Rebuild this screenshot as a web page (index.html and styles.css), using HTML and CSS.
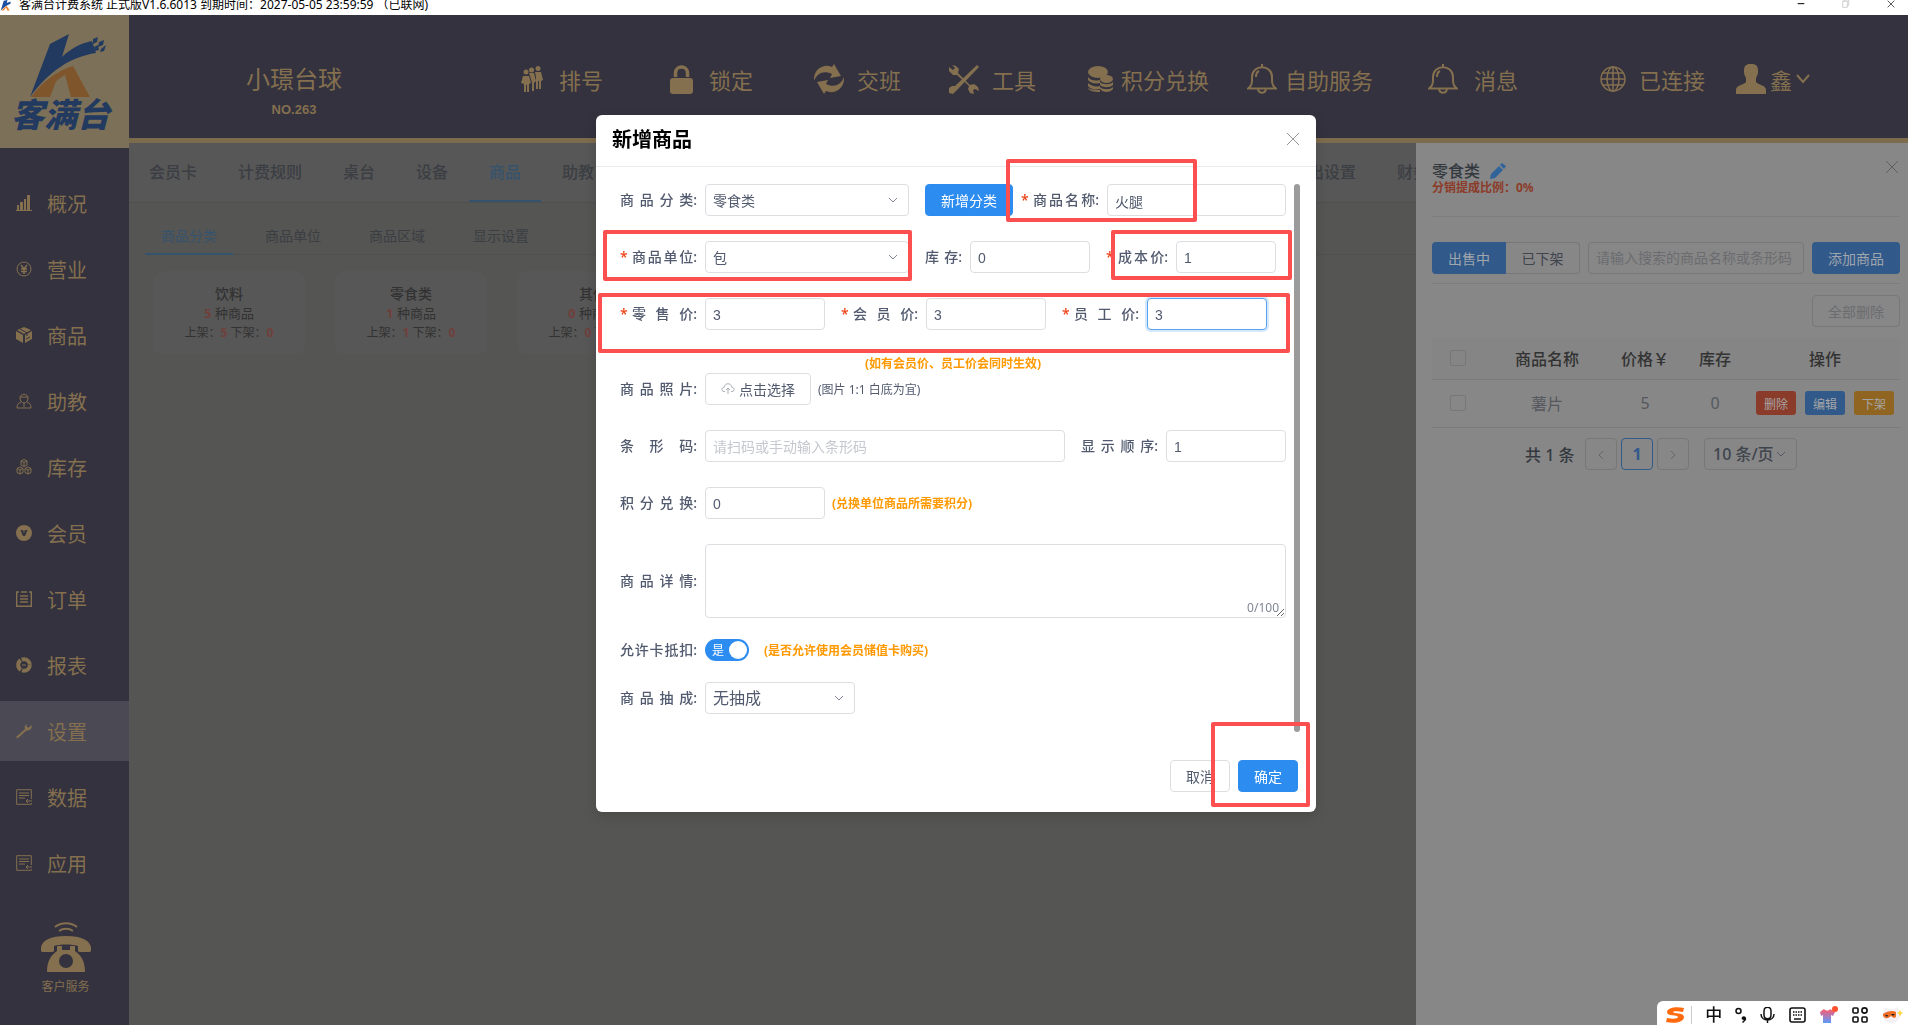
FILE: index.html
```
<!DOCTYPE html>
<html lang="zh-CN">

<head>
  <meta charset="utf-8">
  <title>客满台计费系统</title>
  <link rel="stylesheet" href="styles.css">
</head>

<body>
  <div class="titlebar">
    <svg class="titlebar-logo" viewBox="0 0 16 16"><path d="M5 1l5-1-1 4 5-2v3C9 7 5 10 1 14z" fill="#1c4fa0"/><path d="M2 14c3-3 5-5 7-6l4 6h-3L8 10l-3 4z" fill="#f08020"/></svg>
    <span class="titlebar-text">客满台计费系统 正式版V1.6.6013 到期时间：2027-05-05 23:59:59 （已联网)</span>
    <div class="window-buttons">
      <svg viewBox="0 0 12 12"><path d="M1 5.500h10" stroke="#000" stroke-width="1.500"/></svg>
      <svg viewBox="0 0 12 12"><path d="M1 2h7v9H1zM3 2V0h7v8H8" fill="none" stroke="#bbb"/></svg>
      <svg viewBox="0 0 12 12"><path d="M1 1l10 10M11 1L1 11" stroke="#000"/></svg>
    </div>
  </div>

  <div class="app">
    <aside class="sidebar">
      <div class="logo">
        <svg class="logo-mark" viewBox="0 0 80 66">
          <path d="M21 11L40 1 33 24C41 16 52 10 63 8l4 12C42 24 21 37 1 64z" fill="#233a60"/>
          <path d="M2 64C14 48 28 38 44 33l17 31H42L36 42c-6 3-9 6-10 9l-5 13z" fill="#7f562c"/>
          <path d="M64 6l5-2-1 5-4 2zM70 9l5-2-1 5-5 2zM65 14l4-2 1 5-4 1zM72 16l5-4-2 6-4 1z" fill="#233a60"/>
        </svg>
        <span class="logo-text">客满台</span>
      </div>
      <nav class="menu">
        <a class="menu-item" href="#"><svg viewBox="0 0 16 16"><path d="M0 15h16v1H0zM1 10h2v5H1zM4 7h3v8H4zM8 4h2v11H8zM11 0h3v15h-3z"/></svg>概况</a>
        <a class="menu-item" href="#"><svg class="line" viewBox="0 0 16 16"><circle cx="8" cy="8" r="7"/><path d="M5 4l3 4 3-4M8 8v5M5 8h6M5 10.500h6" stroke-width="1.600"/></svg>营业</a>
        <a class="menu-item" href="#"><svg viewBox="0 0 16 16"><path d="M8 0l7 3-7 4-7-4zM0 4l7 4v8l-7-4zM16 4v8l-7 4V8z"/><path d="M4 2l7 4v3M10 12l4-2" fill="none" stroke="#33323e"/></svg>商品</a>
        <a class="menu-item" href="#"><svg class="line" viewBox="0 0 16 16"><path d="M4 5c0-5 8-5 8 0 0 3-2 5-4 5S4 8 4 5zM4 4h8M5 9c-3 1-4 3-4 6h14c0-3-1-5-4-6M8 10v4"/></svg>助教</a>
        <a class="menu-item" href="#"><svg class="line" viewBox="0 0 16 16"><path d="M8 0.500l3 1.500v4L8 7.500 5 6V2zM5 2l3 1.500L11 2M8 3.500v4M4 8l3 1.500v4L4 15l-3-1.500v-4zM1 9.500L4 11l3-1.500M4 11v4M12 8l3 1.500v4L12 15l-3-1.500v-4zM9 9.500l3 1.500 3-1.500M12 11v4"/></svg>库存</a>
        <a class="menu-item" href="#"><svg viewBox="0 0 16 16"><circle cx="8" cy="8" r="8"/><path d="M4.500 5H7l1 3 1-3h2.500L9 11H7z" fill="#33323e"/></svg>会员</a>
        <a class="menu-item" href="#"><svg class="line" viewBox="0 0 16 16"><path d="M3 1H.700v14.300h14.600V1H13M5 1h6M4 5h8M4 8h8M4 11h8" stroke-width="1.400"/></svg>订单</a>
        <a class="menu-item" href="#"><svg class="line" viewBox="0 0 16 16"><circle cx="8" cy="8" r="5.800" stroke-width="4" stroke-dasharray="11 1.150"/><path d="M6 8h4"/></svg>报表</a>
        <a class="menu-item active" href="#"><svg viewBox="0 0 16 16"><path d="M0 14L9 6c-1-2 0-4 2-5l-.500 3L13 4.500 15.500 2c1 3-1 6-5 5.500L1.500 15.500z"/></svg>设置</a>
        <a class="menu-item" href="#"><svg class="line" viewBox="0 0 16 16"><path d="M15.300 10V.700H.700v14.600h14.600V14M3 4h10M3 6.500h10M3 9h6M16 12h-6M12 10l-2 2 2 2"/></svg>数据</a>
        <a class="menu-item" href="#"><svg class="line" viewBox="0 0 16 16"><path d="M15.300 10V.700H.700v14.600h14.600V14M3 4h10M3 6.500h10M3 9h6M16 12h-6M12 10l-2 2 2 2"/></svg>应用</a>
      </nav>
      <a class="service" href="#">
        <svg viewBox="0 0 50 50">
          <path d="M14 5c6-5 16-5 22 0M18 9c4-3 10-3 14 0" fill="none" stroke="#846f4f" stroke-width="2"/>
          <path d="M0 25c2-7 9-11 25-11s23 4 25 11v3c0 2-1 2-2 2H39c-2 0-2-1-2-2v-4c-6-2-18-2-24 0v4c0 1 0 2-2 2H2c-1 0-2 0-2-2zM16 24h5v4h8v-4h5v5c7 5 10 11 10 21H6c0-10 3-16 10-21z"/>
          <circle cx="25" cy="39" r="7" fill="#33323e"/>
        </svg>
        客户服务
      </a>
    </aside>

    <main class="main">
      <header class="header">
        <div class="shop">
          <span class="shop-name">小璟台球</span>
          <span class="shop-no">NO.263</span>
        </div>
        <nav class="header-nav">
          <a href="#"><svg width="22" height="26" viewBox="0 0 22 26"><circle cx="5" cy="6" r="2.500"/><circle cx="10.500" cy="4" r="2.500"/><circle cx="17" cy="2.500" r="2.500"/><path d="M2 10h6l2 7-2 1v8H6v-7H5v7H3v-8l-3-1zM8 7h5l2 8-2 2v8h-2v-8L9 10zM14 6h6l2 8-2 1v8h-2v-8h-1v8h-2V11z"/></svg>排号</a>
          <a href="#"><svg width="23" height="29" viewBox="0 0 23 29"><path d="M5.500 12V8c0-8 12-8 12 0v4" fill="none" stroke="#846f4f" stroke-width="3.500"/><rect y="13" width="23" height="16" rx="3"/></svg>锁定</a>
          <a class="close-gap" href="#"><svg width="30" height="30" viewBox="0 0 30 30"><path d="M0 17C-1 6 9-1 18 3l2-3 7 12-11 2 2-4C10 6 3 9 0 17zM30 13c1 11-9 18-18 14l-2 3L3 18l11-2-2 4c8 4 15 1 18-7z"/></svg>交班</a>
          <a class="close-gap" href="#"><svg width="30" height="30" viewBox="0 0 30 30"><path d="M28 1l2 2L8 26l-4 4-4-1v-5l3-2h3z"/><path d="M3 1l4 1 3 3-1 4 12 12 4-1 4 3 1 4-4-2-2 1 1 4-4-1-2-4 1-3L8 11l-4 0-4-4 0-4 4 3 2-2z"/></svg>工具</a>
          <a class="tight-gap" href="#"><svg width="25" height="26" viewBox="0 0 25 26"><ellipse cx="10" cy="6" rx="10" ry="6"/><path d="M0 11c3 4 8 4 12 3v3c-5 1-10 0-12-3zM0 17c3 3 8 4 12 3v3c-5 1-10 0-12-3zM0 22c3 2 8 2 12 2v2C6 26 1 25 0 22z"/><ellipse cx="18.500" cy="13" rx="6.500" ry="4"/><path d="M12 16c3 3 10 3 13 0v3c-3 3-10 3-13 0zM12 21c3 3 10 3 13 0v2c-3 4-10 4-13 0z"/></svg>积分兑换</a>
          <a class="tight-gap" href="#"><svg class="line" width="30" height="30" viewBox="0 0 30 30"><path d="M15 0v3M1 24.500h28c-3-2-4-4-4-8V13c0-13-20-13-20 0v3.500c0 4-1 6-4 8zM11 25c1 5 7 5 8 0M9 13c0-4 1-5 3-6" stroke-width="2"/></svg>自助服务</a>
          <a href="#"><svg class="line" width="30" height="30" viewBox="0 0 30 30"><path d="M15 0v3M1 24.500h28c-3-2-4-4-4-8V13c0-13-20-13-20 0v3.500c0 4-1 6-4 8zM11 25c1 5 7 5 8 0M9 13c0-4 1-5 3-6" stroke-width="2"/></svg>消息</a>
          <a class="close-gap" href="#"><svg class="line" width="26" height="26" viewBox="0 0 26 26"><g stroke-width="1.500"><circle cx="13" cy="13" r="12"/><ellipse cx="13" cy="13" rx="6" ry="12"/><path d="M13 1v24M1 13h24M3 7h20M3 19h20" /></g></svg>已连接</a>
          <a class="user" href="#"><svg width="30" height="30" viewBox="0 0 30 30"><path d="M9 2c3-3 9-3 12 0 2 4 1 9-1 12v4c2 3 10 3 10 8v4H0v-4c0-5 8-5 10-8v-4C8 11 7 6 9 2z"/></svg>鑫<svg class="line" width="14" height="10" viewBox="0 0 14 10"><path d="M1 1l6 7 6-7" stroke-width="2"/></svg></a>
        </nav>
      </header>

      <nav class="tabs">
        <a href="#">会员卡</a>
        <a href="#">计费规则</a>
        <a href="#">桌台</a>
        <a href="#">设备</a>
        <a class="active" href="#">商品</a>
        <a href="#">助教</a>
        <a class="tab-far" href="#">支出设置</a>
        <a href="#">财务</a>
      </nav>

      <section class="content">
        <nav class="subtabs">
          <a class="active" href="#">商品分类</a>
          <a href="#">商品单位</a>
          <a href="#">商品区域</a>
          <a href="#">显示设置</a>
        </nav>
        <div class="cards">
          <div class="card">
            <h3>饮料</h3>
            <p class="count"><b>5</b> 种商品</p>
            <p>上架：<b>5</b> 下架：<b>0</b></p>
          </div>
          <div class="card">
            <h3>零食类</h3>
            <p class="count"><b>1</b> 种商品</p>
            <p>上架：<b>1</b> 下架：<b>0</b></p>
          </div>
          <div class="card">
            <h3>其他</h3>
            <p class="count"><b>0</b> 种商品</p>
            <p>上架：<b>0</b> 下架：<b>0</b></p>
          </div>
        </div>
      </section>
    </main>
  </div>

  <aside class="drawer">
    <div class="drawer-head">
      <div>
        <h2>零食类 <svg width="16" height="16" viewBox="0 0 16 16"><path d="M0 16l1-5 8-8 4 4-8 8zM10 2l2-2 4 3-2 3z" fill="#31639b"/></svg></h2>
        <p class="rate">分销提成比例：0%</p>
      </div>
      <button class="icon-btn" type="button" aria-label="关闭"><svg width="12" height="12" viewBox="0 0 12 12"><path d="M0 0l12 12M12 0L0 12" stroke="#606060"/></svg></button>
    </div>
    <div class="drawer-tools">
      <div class="switch-group">
        <button class="on" type="button">出售中</button>
        <button type="button">已下架</button>
      </div>
      <input class="search" type="text" placeholder="请输入搜索的商品名称或条形码" aria-label="搜索商品">
      <button class="add-btn" type="button">添加商品</button>
    </div>
    <div class="drawer-batch">
      <button class="delete-all" type="button" disabled>全部删除</button>
    </div>
    <table class="goods">
      <colgroup>
        <col class="col-check">
        <col class="col-name">
        <col class="col-num">
        <col class="col-num">
        <col class="col-ops">
      </colgroup>
      <thead>
        <tr>
          <th><input type="checkbox" aria-label="全选"></th>
          <th>商品名称</th>
          <th>价格￥</th>
          <th>库存</th>
          <th>操作</th>
        </tr>
      </thead>
      <tbody>
        <tr>
          <td><input type="checkbox" aria-label="选择薯片"></td>
          <td>薯片</td>
          <td>5</td>
          <td>0</td>
          <td>
            <div class="ops">
              <button class="red" type="button">删除</button>
              <button class="blue" type="button">编辑</button>
              <button class="orange" type="button">下架</button>
            </div>
          </td>
        </tr>
      </tbody>
    </table>
    <div class="pager">
      <span class="total">共 1 条</span>
      <button type="button" aria-label="上一页"><svg width="6" height="10" viewBox="0 0 6 10"><path d="M5 1L1 5l4 4" fill="none" stroke="#666"/></svg></button>
      <button class="current" type="button">1</button>
      <button type="button" aria-label="下一页"><svg width="6" height="10" viewBox="0 0 6 10"><path d="M1 1l4 4-4 4" fill="none" stroke="#666"/></svg></button>
      <div class="select-box page-size">
        <select aria-label="每页条数"><option>10 条/页</option></select>
        <svg width="10" height="6" viewBox="0 0 10 6"><path d="M1 1l4 4 4-4" /></svg>
      </div>
    </div>
  </aside>

  <div class="modal-wrap">
    <div class="modal" role="dialog" aria-labelledby="modalTitle">
      <div class="modal-head">
        <h1 id="modalTitle">新增商品</h1>
        <button class="icon-btn" type="button" aria-label="关闭"><svg width="12" height="12" viewBox="0 0 12 12"><path d="M0 0l12 12M12 0L0 12" stroke="#999"/></svg></button>
      </div>

      <div class="modal-body">
        <form class="form" id="goodsForm">
          <div class="row">
            <label class="label" for="category"><span>商品分类</span>:</label>
            <div class="select-box wide">
              <select id="category"><option>零食类</option></select>
              <svg width="10" height="6" viewBox="0 0 10 6"><path d="M1 1l4 4 4-4" /></svg>
            </div>
            <button class="btn primary new-category" type="button">新增分类</button>
            <label class="label after-btn" for="name"><i>*</i><span>商品名称</span>:</label>
            <input class="grow" type="text" id="name" value="火腿">
          </div>

          <div class="row">
            <label class="label" for="unit"><i>*</i><span>商品单位</span>:</label>
            <div class="select-box wide">
              <select id="unit"><option>包</option></select>
              <svg width="10" height="6" viewBox="0 0 10 6"><path d="M1 1l4 4 4-4" /></svg>
            </div>
            <label class="label next short" for="stock"><span>库存</span>:</label>
            <input class="num" type="text" id="stock" value="0">
            <label class="label next cost" for="cost"><i>*</i><span>成本价</span>:</label>
            <input class="num-small" type="text" id="cost" value="1">
          </div>

          <div class="row">
            <label class="label" for="retail"><i>*</i><span>零售价</span>:</label>
            <input class="num" type="text" id="retail" value="3">
            <label class="label next" for="member"><i>*</i><span>会员价</span>:</label>
            <input class="num" type="text" id="member" value="3">
            <label class="label next" for="staff"><i>*</i><span>员工价</span>:</label>
            <input class="num focused" type="text" id="staff" value="3">
          </div>

          <p class="tip tip-center">(如有会员价、员工价会同时生效)</p>

          <div class="row">
            <label class="label" for="photo"><span>商品照片</span>:</label>
            <button class="btn upload" type="button" id="photo"><svg width="14" height="12" viewBox="0 0 14 12"><path d="M4 8.500H3C0 8 0 5 3 4.500c1-5 7-5 8 0 3 .500 3 3.500 0 4h-1M7 11V5M5 7l2-2 2 2" fill="none" stroke="#aaadb5"/></svg>点击选择</button>
            <span class="hint">(图片 1:1 白底为宜)</span>
          </div>

          <div class="row">
            <label class="label" for="barcode"><span>条形码</span>:</label>
            <input class="grow" type="text" id="barcode" placeholder="请扫码或手动输入条形码">
            <label class="label next" for="order"><span>显示顺序</span>:</label>
            <input class="num" type="text" id="order" value="1">
          </div>

          <div class="row">
            <label class="label" for="points"><span>积分兑换</span>:</label>
            <input class="num" type="text" id="points" value="0">
            <span class="tip">(兑换单位商品所需要积分)</span>
          </div>

          <div class="row tight">
            <label class="label" for="detail"><span>商品详情</span>:</label>
            <div class="textarea-box">
              <textarea id="detail" maxlength="100"></textarea>
              <span class="counter">0/100</span>
            </div>
          </div>

          <div class="row tight">
            <label class="label" for="deduct"><span>允许卡抵扣</span>:</label>
            <label class="switch"><input type="checkbox" id="deduct" checked><span>是</span></label>
            <span class="tip tip-switch">(是否允许使用会员储值卡购买)</span>
          </div>

          <div class="row tight">
            <label class="label" for="commission"><span>商品抽成</span>:</label>
            <div class="select-box commission">
              <select id="commission"><option>无抽成</option></select>
              <svg width="10" height="6" viewBox="0 0 10 6"><path d="M1 1l4 4 4-4" /></svg>
            </div>
          </div>
        </form>
        <div class="scrollbar"></div>
      </div>

      <div class="modal-foot">
        <button class="btn" type="button">取消</button>
        <button class="btn primary" type="submit" form="goodsForm">确定</button>
      </div>

      <!-- red marker boxes -->
      <div class="mark mark-name"></div>
      <div class="mark mark-unit"></div>
      <div class="mark mark-cost"></div>
      <div class="mark mark-prices"></div>
      <div class="mark mark-ok"></div>
    </div>
  </div>

  <div class="ime">
    <div class="ime-logo">
      <svg width="19" height="16" viewBox="0 0 19 16"><path d="M18 1C10-1 1 1 1 5c0 5 11 2 11 5 0 2-6 2-11 1l-1 4c9 2 18 0 18-5 0-5-11-3-11-5 0-1 5-1 10 0z" fill="#ff6a0f"/></svg>
      <span class="ime-line"></span>
    </div>
    <span class="ime-lang">中</span>
    <svg width="12" height="16" viewBox="0 0 12 16"><circle cx="3.500" cy="4" r="2.500" fill="none" stroke="#111" stroke-width="1.500"/><path d="M7 10c2-2 5 0 4 3l-3 3-1-1 2-2c-2 0-3-1-2-3z" fill="#111"/></svg>
    <svg width="15" height="16" viewBox="0 0 15 16"><path d="M4 4c0-5 7-5 7 0v4c0 5-7 5-7 0zM1 7c0 8 13 8 13 0M7.500 13v3" fill="none" stroke="#111" stroke-width="1.500"/></svg>
    <svg width="17" height="16" viewBox="0 0 17 16"><rect x="1" y="1" width="15" height="14" rx="2" fill="none" stroke="#111" stroke-width="1.600"/><path d="M4 5h9M4 8h9" stroke="#111" stroke-width="1.500" stroke-dasharray="1.500 1"/><path d="M5 12h7" stroke="#111" stroke-width="1.500"/></svg>
    <svg width="20" height="18" viewBox="0 0 20 18"><defs><linearGradient id="shirt" x1="0" y1="0" x2="0" y2="1"><stop offset="0" stop-color="#ff5a6a"/><stop offset="1" stop-color="#5a9bff"/></linearGradient></defs><path d="M1 6l4-3c2 2 5 2 6 0l5 3-2 4-2-1v8H4V9l-2 1z" fill="url(#shirt)"/><circle cx="16" cy="3" r="3" fill="#ff5030"/></svg>
    <svg width="16" height="16" viewBox="0 0 16 16"><g fill="none" stroke="#111" stroke-width="1.600"><rect x="1" y="1" width="5" height="5" rx="1"/><circle cx="12.500" cy="3.500" r="2.600"/><rect x="1" y="10" width="5" height="5" rx="1"/><rect x="10" y="10" width="5" height="5" rx="1"/></g></svg>
    <svg width="22" height="18" viewBox="0 0 22 18"><path d="M1 8L4 1l4 2h5l4-2 2 8c-1 11-17 11-18-1z" fill="#f3f1f5"/><path d="M2 8c4-3 10-4 13-2v5c-3 2-3 0-5-1-2 2-5 4-8 0z" fill="#ec6b25"/><path d="M4 9l3 0-1 2zM10 8h4l-2 2z" fill="#222"/><path d="M19 4l1 2 2 1-2 1-1 3-1-3-2-1 2-1z" fill="#ffd43a"/></svg>
  </div>
</body>

</html>
```
FILE: styles.css
```
* {
  box-sizing: border-box;
}

body {
  margin: 0;
  height: 100vh;
  overflow: hidden;
  display: flex;
  flex-direction: column;
  font-family: "Noto Sans", "Noto Sans CJK SC", sans-serif;
  font-size: 14px;
  color: #515a6e;
  background-color: #555553;
}

h1, h2, h3, p {
  margin: 0;
}

a {
  color: inherit;
  text-decoration: none;
}

button, input, select, textarea {
  font-family: "Liberation Sans", "Noto Sans CJK SC", sans-serif;
  font-size: 14px;
  color: #515a6e;
}

button {
  cursor: pointer;
  padding: 0;
}

svg {
  flex: none;
}

/* window title bar */
.titlebar {
  height: 15px;
  flex: none;
  display: flex;
  align-items: flex-start;
  background-color: #fff;
  color: #000;
  font-size: 12px;
  line-height: 9px;
}

.titlebar-logo {
  width: 12px;
  height: 12px;
  margin-right: 7px;
}

.window-buttons {
  margin-left: auto;
  padding-right: 11px;
  display: flex;
  gap: 33px;
}

.window-buttons svg {
  width: 12px;
  height: 8px;
}

.app {
  flex: 1;
  display: flex;
  min-height: 0;
}

/* sidebar */
.sidebar {
  width: 129px;
  flex: none;
  display: flex;
  flex-direction: column;
  background-color: #33323e;
  color: #846f4f;
}

.sidebar svg, .header svg {
  fill: #846f4f;
}

.sidebar svg.line, .header svg.line {
  fill: none;
  stroke: #846f4f;
}

.logo {
  height: 133px;
  padding-top: 18px;
  display: flex;
  flex-direction: column;
  align-items: center;
  background-color: #7d7058;
}

.logo-mark {
  width: 80px;
  height: 66px;
  margin-left: 8px;
}

.logo-text {
  margin-right: 8px;
  color: #233a60;
  font-size: 33px;
  font-weight: 900;
  font-style: italic;
  line-height: 32px;
}

.menu {
  padding-top: 25px;
  display: flex;
  flex-direction: column;
  gap: 6px;
}

.menu-item {
  height: 60px;
  padding-left: 16px;
  display: flex;
  align-items: center;
  gap: 15px;
  font-size: 20px;
}

.menu-item svg {
  width: 16px;
  height: 16px;
}

.menu-item.active {
  background-color: #4a4954;
}

.service {
  padding: 29px 0 0 2px;
  display: flex;
  flex-direction: column;
  align-items: center;
  gap: 5px;
  font-size: 12px;
}

.service svg {
  width: 50px;
  height: 50px;
}

/* header */
.main {
  flex: 1;
  min-width: 0;
}

.header {
  height: 128px;
  display: flex;
  background-color: #33323e;
  border-bottom: 5px solid #7d6b4d;
  color: #846f4f;
}

.shop {
  width: 392px;
  padding: 48px 62px 0 0;
  text-align: center;
  display: flex;
  flex-direction: column;
}

.shop-name {
  font-size: 24px;
  line-height: 32px;
}

.shop-no {
  font-family: "Liberation Sans", sans-serif;
  font-size: 13px;
  font-weight: bold;
  line-height: 30px;
}

.header-nav {
  flex: 1;
  height: 128px;
  display: grid;
  grid-template-columns: 149fr 144fr 135fr 139fr 159fr 181fr 172fr 136fr 172fr;
  align-items: center;
  font-size: 22px;
  white-space: nowrap;
}

.header-nav a {
  display: flex;
  align-items: center;
  gap: 16px;
}

.header-nav .close-gap {
  gap: 13px;
}

.header-nav .tight-gap {
  gap: 8px;
}

.header-nav .user {
  gap: 4px;
}

/* tabs */
.tabs {
  height: 60px;
  display: flex;
  gap: 1px;
  background-color: #575757;
  border-bottom: 1px solid #4f4f4f;
  color: #3b3e43;
  font-size: 16px;
  font-weight: 500;
  line-height: 58px;
  overflow: hidden;
  white-space: nowrap;
}

.tabs a {
  padding: 0 20px;
}

.tabs .active {
  color: #36536e;
  border-bottom: 2px solid #36536e;
}

.tabs .tab-far {
  margin-left: 657px;
}

.content {
  padding: 17px 16px;
}

.subtabs {
  height: 35px;
  display: flex;
  gap: 16px;
  border-bottom: 1px solid #4f4f4f;
  color: #3b3e43;
  line-height: 32px;
}

.subtabs a {
  height: 35px;
  padding: 0 16px;
}

.subtabs .active {
  color: #36536e;
  border-bottom: 2px solid #36536e;
}

.cards {
  padding: 16px 8px;
  display: flex;
  gap: 30px;
}

.card {
  width: 152px;
  height: 84px;
  padding-top: 13px;
  flex: none;
  border-radius: 10px;
  background-color: #575757;
  color: #323232;
  text-align: center;
  font-size: 12px;
  line-height: 19px;
}

.card h3 {
  font-size: 14px;
  font-weight: 500;
  line-height: 20px;
}

.card .count {
  font-size: 13px;
}

.card b {
  color: #703f3b;
}

/* right drawer */
.drawer {
  position: fixed;
  top: 143px;
  right: 0;
  bottom: 0;
  width: 492px;
  padding: 0 8px 0 16px;
  background-color: #878787;
  color: #33383f;
}

.icon-btn {
  border: none;
  background: none;
  line-height: 12px;
}

.drawer-head {
  height: 74px;
  padding: 18px 2px 0 0;
  display: flex;
  justify-content: space-between;
  align-items: flex-start;
  border-bottom: 1px solid #7d7d7d;
}

.drawer-head h2 {
  display: flex;
  align-items: center;
  gap: 10px;
  font-size: 16px;
  font-weight: 500;
  line-height: 20px;
}

.rate {
  color: #8c3b28;
  font-size: 12px;
  font-weight: bold;
  line-height: 14px;
}

.drawer-tools {
  height: 67px;
  padding-top: 25px;
  display: flex;
  gap: 8px;
  border-bottom: 1px solid #7d7d7d;
}

.drawer input, .drawer button, .drawer select {
  color: #3f444d;
  background-color: transparent;
}

.switch-group {
  display: flex;
}

.switch-group button {
  width: 74px;
  height: 32px;
  border: 1px solid #777;
  border-left: none;
  border-radius: 0 4px 4px 0;
}

.drawer .switch-group .on, .drawer .add-btn {
  background-color: #31598a;
  border: none;
  color: #a0a6ad;
}

.drawer .switch-group .on {
  border-radius: 4px 0 0 4px;
}

.drawer .search {
  flex: 1;
  min-width: 0;
  height: 32px;
  padding: 0 7px;
  border: 1px solid #777;
  border-radius: 4px;
}

.search::placeholder {
  color: #6b6c6f;
}

.add-btn, .delete-all {
  width: 88px;
  height: 32px;
  border-radius: 4px;
}

.drawer-batch {
  padding: 11px 0;
  display: flex;
  justify-content: flex-end;
}

.drawer .delete-all {
  border: 1px solid #777;
  color: #6b6c6f;
}

.goods {
  width: 100%;
  table-layout: fixed;
  border-collapse: collapse;
  text-align: center;
  font-size: 16px;
}

.col-check {
  width: 52px;
}

.col-num {
  width: 70px;
}

.col-ops {
  width: 150px;
}

.goods th, .goods td {
  padding: 0;
  border-bottom: 1px solid #7b7b7b;
}

.goods th {
  height: 41px;
  background-color: #858585;
  color: #333;
  font-weight: 500;
}

.goods td {
  height: 48px;
  color: #55585e;
}

.goods input {
  appearance: none;
  width: 16px;
  height: 16px;
  margin: 4px 0 0;
  border: 1px solid #777;
  border-radius: 2px;
}

.ops {
  display: flex;
  justify-content: center;
  gap: 9px;
}

.drawer .ops button {
  width: 40px;
  height: 24px;
  border: none;
  border-radius: 3px;
  color: #a5a5a5;
  font-size: 12px;
}

.drawer .ops .red {
  background-color: #8b3b29;
}

.drawer .ops .blue {
  background-color: #31598a;
}

.drawer .ops .orange {
  background-color: #8f6521;
}

.pager {
  padding: 10px 0 0 93px;
  display: flex;
  align-items: center;
  gap: 4px;
  font-size: 16px;
  font-weight: 500;
}

.pager .total {
  width: 56px;
}

.pager button {
  width: 32px;
  height: 32px;
  border: 1px solid #777;
  border-radius: 4px;
  font-family: "Noto Sans", sans-serif;
  font-size: 16px;
}

.pager .current {
  border-color: #31598a;
  color: #31598a;
  font-weight: bold;
}

/* select with own arrow */
.select-box {
  display: grid;
  align-items: center;
}

.select-box select {
  grid-area: 1 / 1;
  width: 100%;
  height: 32px;
  padding: 2px 7px 0;
  appearance: none;
  border: 1px solid #dcdee2;
  border-radius: 4px;
  background-color: #fff;
}

.select-box svg {
  grid-area: 1 / 1;
  justify-self: end;
  margin-right: 11px;
  fill: none;
  stroke: #808695;
  pointer-events: none;
}

.page-size {
  width: 93px;
  margin-left: 11px;
}

.drawer .page-size select {
  padding: 0 8px;
  border-color: #777;
  background-color: transparent;
  font-family: "Noto Sans", "Noto Sans CJK SC", sans-serif;
  font-size: 16px;
  font-weight: 500;
}

.page-size svg {
  stroke: #55585e;
}

/* modal */
.modal-wrap {
  position: fixed;
  top: 115px;
  left: 4px;
  right: 0;
  display: flex;
  justify-content: center;
}

.modal {
  position: relative;
  width: 720px;
  background-color: #fff;
  border-radius: 6px;
  box-shadow: 0 4px 12px rgba(0, 0, 0, 0.15);
}

.modal-head {
  height: 52px;
  padding: 0 17px 2px 16px;
  display: flex;
  justify-content: space-between;
  align-items: center;
  border-bottom: 1px solid #e8eaec;
}

.modal-head h1 {
  color: #000;
  font-size: 20px;
  font-weight: bold;
  line-height: 24px;
}

.modal-body {
  padding: 17px 16px 0 24px;
  display: flex;
  gap: 8px;
}

.form {
  flex: 1;
  min-width: 0;
  padding-bottom: 2px;
}

.scrollbar {
  width: 6px;
  flex: none;
  border-radius: 3px;
  background-color: #9b9b9b;
}

.row {
  min-height: 32px;
  margin-bottom: 25px;
  display: flex;
  align-items: center;
}

.row.tight {
  margin-bottom: 16px;
}

.label {
  width: 77px;
  margin-right: 8px;
  flex: none;
  display: flex;
  font-weight: 500;
  line-height: 20px;
}

.label span {
  flex: 1;
  text-align: justify;
  text-align-last: justify;
  white-space: nowrap;
}

.label i {
  width: 12px;
  color: #ed4014;
  font-style: normal;
}

.label.next {
  margin-left: 16px;
}

.label.short {
  width: 37px;
}

.label.cost {
  width: 62px;
}

.label.after-btn {
  width: 78px;
  margin-left: 8px;
}

.row input[type="text"] {
  height: 32px;
  min-width: 0;
  padding: 2px 7px 0;
  border: 1px solid #dcdee2;
  border-radius: 4px;
  background-color: #fff;
}

.row input::placeholder {
  color: #c5c8ce;
}

.row .grow {
  flex: 1;
}

.row .num {
  width: 120px;
}

.row .num-small {
  width: 100px;
}

.row input.focused {
  border-color: #57a3f3;
  box-shadow: 0 0 0 2px rgba(45, 140, 240, 0.2);
}

.wide {
  width: 204px;
}

.commission {
  width: 150px;
}

.commission select {
  padding-top: 0;
  font-size: 16px;
}

.btn {
  min-width: 60px;
  height: 32px;
  border: 1px solid #dcdee2;
  border-radius: 4px;
  background-color: #fff;
}

.btn.primary {
  border-color: #2d8cf0;
  background-color: #2d8cf0;
  color: #fff;
}

.new-category {
  width: 88px;
  margin-left: 16px;
}

.upload {
  width: 106px;
  display: flex;
  align-items: center;
  justify-content: center;
  gap: 4px;
}

.hint {
  margin-left: 7px;
  font-size: 12px;
}

.tip {
  margin-left: 7px;
  color: #ff9900;
  font-size: 12px;
  font-weight: bold;
}

.tip-switch {
  margin-left: 15px;
}

.tip-center {
  margin: 0;
  line-height: 18px;
  text-align: center;
}

.textarea-box {
  flex: 1;
  height: 74px;
  display: grid;
}

.textarea-box textarea {
  grid-area: 1 / 1;
  width: 100%;
  height: 74px;
  border: 1px solid #dcdee2;
  border-radius: 4px;
}

.counter {
  grid-area: 1 / 1;
  align-self: end;
  justify-self: end;
  margin-right: 7px;
  color: #808695;
  font-size: 12px;
  line-height: 20px;
  pointer-events: none;
  z-index: 1;
}

.switch {
  width: 44px;
  height: 22px;
  padding: 0 2px 0 7px;
  display: flex;
  align-items: center;
  justify-content: space-between;
  border-radius: 11px;
  background-color: #2d8cf0;
  color: #fff;
  font-size: 12px;
}

.switch input {
  appearance: none;
  order: 1;
  width: 18px;
  height: 18px;
  margin: 0;
  border-radius: 50%;
  background-color: #fff;
}

.modal-foot {
  padding: 28px 18px 20px;
  display: flex;
  justify-content: flex-end;
  gap: 8px;
}

.mark {
  position: absolute;
  border: 4px solid #fc5050;
  border-radius: 2px;
  pointer-events: none;
}

.mark-name {
  left: 410px;
  top: 44px;
  width: 191px;
  height: 63px;
}

.mark-unit {
  left: 7px;
  top: 115px;
  width: 309px;
  height: 51px;
}

.mark-cost {
  left: 515px;
  top: 115px;
  width: 181px;
  height: 50px;
}

.mark-prices {
  left: 2px;
  top: 178px;
  width: 692px;
  height: 60px;
}

.mark-ok {
  left: 615px;
  top: 607px;
  width: 99px;
  height: 85px;
}

/* input method bar */
.ime {
  position: fixed;
  right: 0;
  bottom: 0;
  width: 251px;
  height: 24px;
  padding: 4px 5px 0 9px;
  display: flex;
  align-items: center;
  justify-content: space-between;
  border-radius: 6px 0 0 0;
  background-color: #fff;
}

.ime-logo {
  display: flex;
  align-items: center;
  gap: 6px;
}

.ime-line {
  width: 1px;
  height: 18px;
  background-color: #ccc;
}

.ime-lang {
  color: #111;
  font-size: 17px;
  font-weight: 500;
  line-height: 18px;
}
```
